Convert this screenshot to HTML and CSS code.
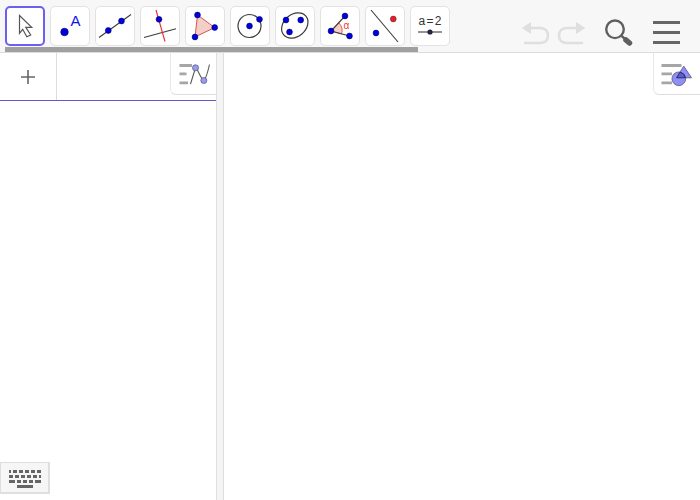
FILE: index.html
```html
<!DOCTYPE html>
<html lang="en">
<head>
<meta charset="utf-8">
<title>GeoGebra Classic</title>
<link rel="stylesheet" href="styles.css">
</head>
<body>
<div class="app">
  <header class="toolbar">
    <div class="tools">
      <button class="tool active"><svg viewBox="5 6 40 40"><path class="cursor" d="M19.5 15.500 31.700 27.300H25.800L30.700 35 26.800 36.700 22.700 29.300 19.500 33.300Z"/></svg></button>
      <button class="tool"><svg viewBox="50 6 40 40"><circle class="pt" cx="64.500" cy="32" r="3.800"/><text class="lbl-a" x="70.500" y="25.700">A</text></svg></button>
      <button class="tool"><svg viewBox="95 6 40 40"><path class="ln" d="M99 37.500 131 14.500"/><circle class="pt" cx="108.300" cy="30.500" r="2.900"/><circle class="pt" cx="121.500" cy="21" r="2.900"/></svg></button>
      <button class="tool"><svg viewBox="140 6 40 40"><path class="ln" d="M144 37.500 176 28.800"/><path class="ln-red" d="M156 10 165 41.500"/><circle class="pt" cx="159" cy="19.300" r="2.900"/></svg></button>
      <button class="tool"><svg viewBox="185 6 40 40"><path class="poly" d="M197.500 15 214.700 27.500 195 37Z"/><circle class="pt" cx="197.500" cy="15" r="2.900"/><circle class="pt" cx="214.700" cy="27.500" r="2.900"/><circle class="pt" cx="195" cy="37" r="2.900"/></svg></button>
      <button class="tool"><svg viewBox="230 6 40 40"><circle class="curve" cx="249.500" cy="26" r="11.500"/><circle class="pt" cx="249.500" cy="26" r="2.900"/><circle class="pt" cx="259.500" cy="19.300" r="2.900"/></svg></button>
      <button class="tool"><svg viewBox="275 6 40 40"><ellipse class="curve" cx="294.800" cy="25.500" rx="14.500" ry="11" transform="rotate(-40 294.800 25.500)"/><circle class="pt" cx="286" cy="20" r="2.900"/><circle class="pt" cx="300.700" cy="20" r="2.900"/><circle class="pt" cx="289.500" cy="32" r="2.900"/></svg></button>
      <button class="tool"><svg viewBox="320 6 40 40"><path class="wedge" d="M331 31 339 23A11 11 0 0 1 341.500 34Z"/><path class="ln" d="M345 16 331 31 349.500 36"/><circle class="pt" cx="345" cy="16" r="2.900"/><circle class="pt" cx="331" cy="31" r="2.900"/><circle class="pt" cx="349.500" cy="36" r="2.900"/><text class="lbl-alpha" x="343.500" y="29">α</text></svg></button>
      <button class="tool"><svg viewBox="365 6 40 40"><path class="ln" d="M371 10 398 42"/><circle class="pt" cx="376" cy="33" r="2.900"/><circle class="pt-red" cx="393.300" cy="19" r="2.900"/></svg></button>
      <button class="tool"><svg viewBox="410 6 40 40"><text class="lbl-eq" x="430" y="25">a = 2</text><path class="ln" d="M418 32H442"/><circle class="pt-dark" cx="430" cy="32" r="2.600"/></svg></button>
    </div>
    <div class="actions">
      <svg class="act undo" viewBox="0 0 30 24"><path class="head" d="M1.700 7 11 1V13Z"/><path d="M10 7H20C25 7 28 10 28 14.500S25 22 20 22H4"/></svg>
      <svg class="act redo" viewBox="0 0 30 24"><path class="head" d="M28.300 7 19 1V13Z"/><path d="M20 7H10C5 7 2 10 2 14.500S5 22 10 22H26"/></svg>
      <svg class="act search" viewBox="0 0 30 30"><circle cx="11" cy="11.300" r="8.800"/><path class="neck" d="M17.500 17.800 21 21"/><path class="handle" d="M22 22 25.500 25"/></svg>
      <div class="menu"><span></span><span></span><span></span></div>
    </div>
    <div class="scrollthumb"></div>
  </header>
  <main class="panels">
    <section class="algebra">
      <div class="algebra-head">
        <div class="plus"><svg viewBox="0 0 16 16"><path d="M8 1V15M1 8H15"/></svg></div>
        <div class="stylebar-btn left"><svg viewBox="0 0 36 26"><path class="bars" d="M3.500 4.500H16M3.500 12.800H10.500M3.500 21.800H12"/><path class="wave" d="M14.500 23 19.500 6.800C22 8 24 17 27.800 19.500C30 18 32 10 33.500 3.500"/><circle class="node" cx="19.500" cy="6.800" r="3"/><circle class="node" cx="27.800" cy="19.500" r="3"/></svg></div>
      </div>
      <button class="keyboard"><svg viewBox="0 0 50 20"><g class="keys"><rect x="9" y="0" width="2" height="3"/><rect x="13" y="0" width="4" height="3"/><rect x="19" y="0" width="4" height="3"/><rect x="25" y="0" width="4" height="3"/><rect x="31" y="0" width="4" height="3"/><rect x="37" y="0" width="4" height="3"/><rect x="9" y="5" width="4" height="3"/><rect x="15" y="5" width="4" height="3"/><rect x="21" y="5" width="4" height="3"/><rect x="27" y="5" width="4" height="3"/><rect x="33" y="5" width="4" height="3"/><rect x="39" y="5" width="2" height="3"/><rect x="9" y="10" width="6" height="3"/><rect x="17" y="10" width="4" height="3"/><rect x="23" y="10" width="4" height="3"/><rect x="29" y="10" width="4" height="3"/><rect x="35" y="10" width="6" height="3"/><rect x="17" y="15" width="16" height="3"/></g></svg></button>
    </section>
    <div class="divider"></div>
    <section class="graphics">
      <div class="stylebar-btn right"><svg viewBox="0 0 36 26"><path class="bars" d="M2.500 4.500H22.500M2.500 12.800H13M2.500 21.800H13"/><path class="shape" d="M24.800 5.200 32.500 16.800H17.200Z"/><circle class="shape" cx="19.800" cy="17.800" r="6.800"/><path class="overlap" d="M17.500 16.800 21 11.200A6.800 6.800 0 0 1 26.400 16.800Z"/></svg></div>
    </section>
  </main>
</div>
</body>
</html>
```
FILE: styles.css
```css
* { box-sizing: border-box; }
html, body { margin: 0; height: 100%; background: #fff; overflow: hidden; }
body { font-family: "Liberation Sans", Arial, sans-serif; }
.app { display: flex; flex-direction: column; height: 100%; }

.toolbar {
  position: relative;
  display: flex;
  justify-content: space-between;
  height: 53px;
  flex: none;
  padding: 6px 0 0 5px;
  background: #f7f7f7;
  border-bottom: 1px solid #dcdcdc;
}
.tools { display: flex; gap: 5px; align-items: flex-start; }
.tool {
  width: 40px; height: 40px; padding: 0;
  background: #fff;
  border: 1px solid #e2e2e2;
  border-radius: 5px;
  position: relative;
}
.tool svg { position: absolute; left: -1px; top: -1px; width: 40px; height: 40px; display: block; }
.tool.active { border: 2px solid #6a5ff0; }
.tool.active svg { left: -2px; top: -2px; }

.cursor { fill: #fff; stroke: #555; stroke-width: 1.2; }
.pt { fill: #0000e0; stroke: #00006a; stroke-width: .6; }
.pt-red { fill: #e0202a; stroke: #802030; stroke-width: .6; }
.pt-dark { fill: #222244; }
.ln { fill: none; stroke: #3c3c3c; stroke-width: 1.1; }
.ln-red { fill: none; stroke: #ee2a2a; stroke-width: 1.1; }
.poly { fill: #f3cfc8; stroke: #d8574a; stroke-width: 1; }
.wedge { fill: #f3cfc8; stroke: #d8574a; stroke-width: .9; }
.curve { fill: none; stroke: #3a3a3a; stroke-width: 1.2; }
.lbl-a { font-size: 15px; fill: #1212e8; font-family: "Liberation Sans", sans-serif; }
.lbl-alpha { font-size: 10px; fill: #e83a3a; font-family: "Liberation Sans", sans-serif; }
.lbl-eq { font-size: 12px; word-spacing: -2px; fill: #333; text-anchor: middle; font-family: "Liberation Sans", sans-serif; }

.actions { display: flex; align-items: flex-start; padding-right: 20px; }
.act { display: block; fill: none; }
.undo, .redo { width: 30px; height: 24px; margin-top: 15px; }
.undo { margin-right: 7px; }
.redo { margin-right: 17px; }
.undo path, .redo path { fill: none; stroke: #dfdfdf; stroke-width: 2.6; }
.undo .head, .redo .head { fill: #dfdfdf; stroke: none; }
.search { width: 30px; height: 30px; margin-top: 12px; margin-right: 19px; }
.search circle { fill: none; stroke: #5f5f5f; stroke-width: 2.4; }
.neck { stroke: #5f5f5f; stroke-width: 2.4; fill: none; }
.handle { stroke: #5f5f5f; stroke-width: 5.5; stroke-linecap: round; fill: none; }
.menu { display: flex; flex-direction: column; gap: 7px; width: 27px; margin-top: 15px; }
.menu span { display: block; height: 3px; background: #666; }

.scrollthumb {
  position: absolute; left: 5px; bottom: 0;
  width: 413px; height: 5px; background: #a0a0a0;
}

.panels { flex: 1; display: flex; min-height: 0; }
.algebra { position: relative; width: 216px; flex: none; }
.algebra-head { position: relative; height: 48px; border-bottom: 1px solid #6557d2; display: flex; }
.plus { width: 57px; height: 47px; border-right: 1px solid #dcdcdc; display: flex; align-items: center; justify-content: center; }
.plus svg { width: 16px; height: 16px; margin-right: 1px; }
.plus path { stroke: #666; stroke-width: 1.6; fill: none; }

.stylebar-btn {
  position: absolute; top: 0; right: 0;
  width: 47px; height: 42px;
  background: #fff;
  border-left: 1px solid #e8e8e8;
  border-bottom: 1px solid #dedede;
  border-bottom-left-radius: 6px;
  display: flex; align-items: center; justify-content: center;
}
.stylebar-btn.left { width: 46px; }
.stylebar-btn svg { width: 36px; height: 26px; }
.bars { stroke: #a6a6a6; stroke-width: 2.8; fill: none; }
.wave { fill: none; stroke: #5a5a5a; stroke-width: 1.1; }
.node { fill: #9a9af0; stroke: #5a5a8a; stroke-width: .8; }
.shape { fill: #8f8ff5; stroke: #5c5c8c; stroke-width: .9; }
.overlap { fill: #5c5cd8; stroke: #222255; stroke-width: .9; }

.divider { width: 8px; flex: none; background: #f4f4f4; border-left: 1px solid #e0e0e0; border-right: 1px solid #dedede; }
.graphics { position: relative; flex: 1; }

.keyboard {
  position: absolute; left: 0; top: 409px;
  width: 50px; height: 32px; padding: 0;
  background: #f6f6f6;
  border: 1px solid #dfdfdf;
  border-bottom-width: 2px;
  border-right-width: 2px;
  display: block;
}
.keyboard svg { position: absolute; left: -1px; top: 7px; width: 50px; height: 20px; }
.keys { fill: #666; }
```
